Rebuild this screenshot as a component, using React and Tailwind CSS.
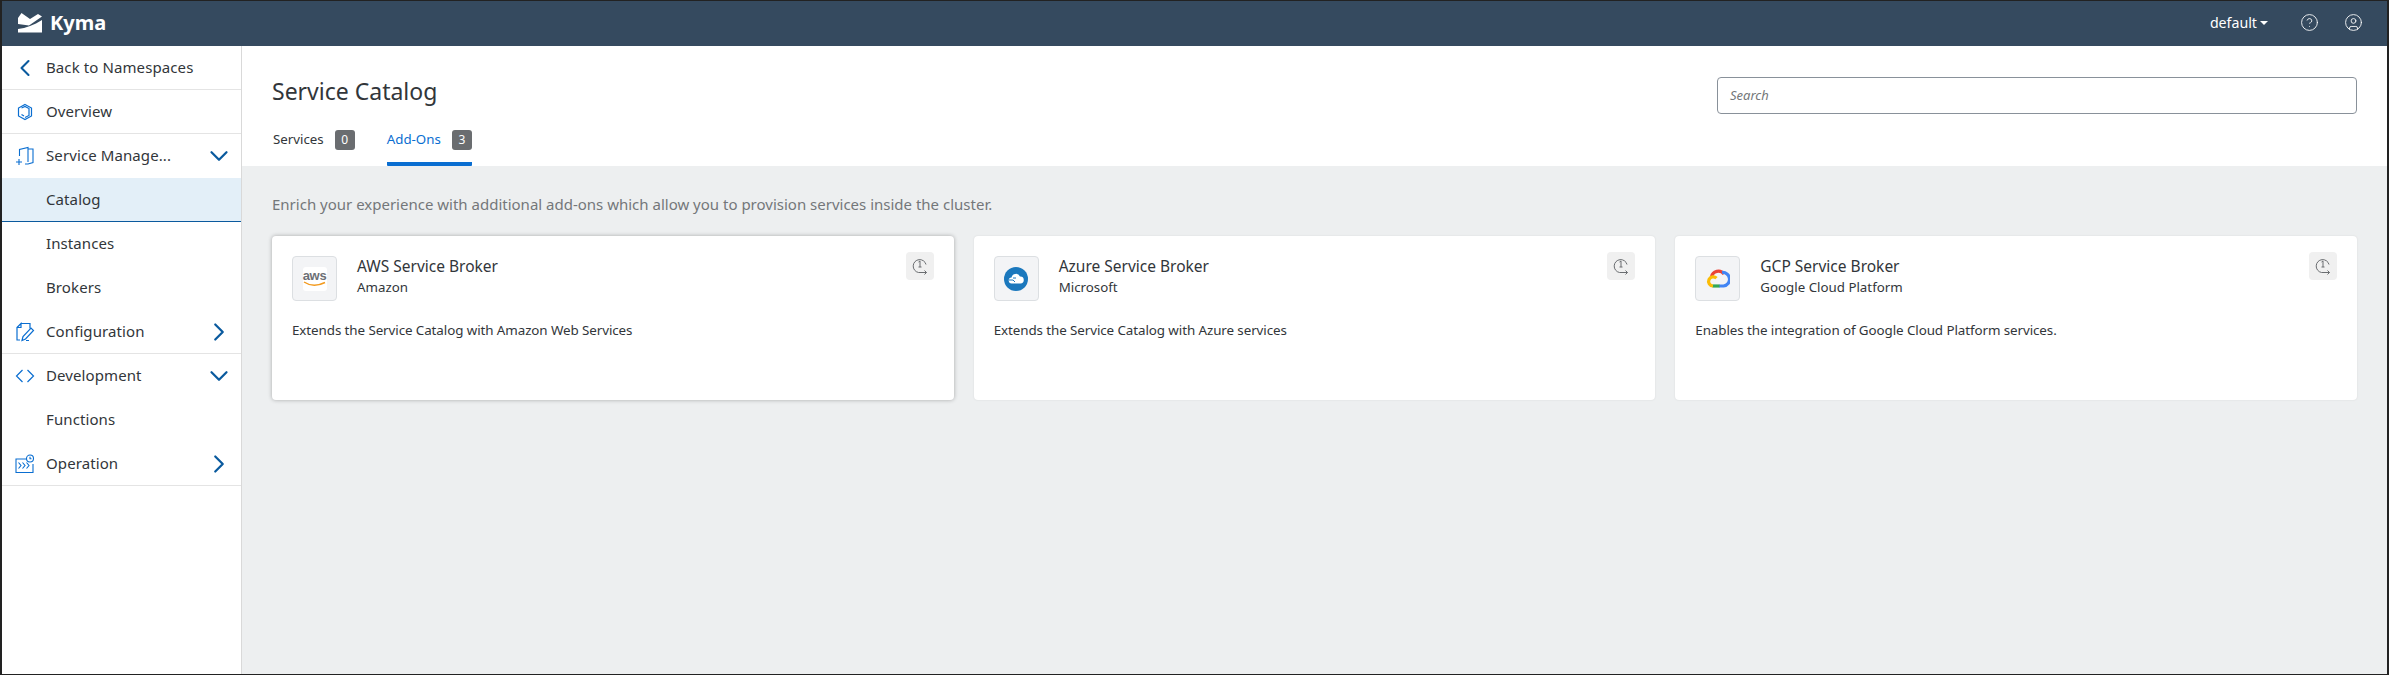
import React from "react";
import { ChevronLeft, ChevronRight, ChevronDown, CircleHelp, CircleUser } from "lucide-react";

const font = { fontFamily: '"Noto Sans", sans-serif' };

const OverviewIcon = () => (
  <svg width="18" height="18" viewBox="0 0 18 18" fill="none" stroke="#0a6ed1" strokeWidth="1.2">
    <path d="M9 1.5 15.5 5v8L9 16.5 2.5 13V5L9 1.5Z" />
    <path d="M5.5 5 9 3.4 13 5.5v7L9 14.5" />
    <path d="M5.5 11.5 8 13" />
  </svg>
);

const ServiceIcon = () => (
  <svg width="20" height="20" viewBox="0 0 20 20" fill="none" stroke="#0a6ed1" strokeWidth="1.1">
    <path d="M4.5 10V3.5L13 1.5V16" />
    <path d="M13 3h5v13.5l-5 1.5h-3" />
    <path d="M1 16h6M4 13v6" />
  </svg>
);

const ConfigIcon = () => (
  <svg width="20" height="20" viewBox="0 0 20 20" fill="none" stroke="#0a6ed1" strokeWidth="1.2">
    <path d="M6 1.5h9v5M2 5.5 6 1.5v4H2v12.5h3M11 18.5h3" />
    <path d="M7 18.5l1-4 8-8.5 2.5 2.5-8 8.5-3.5 1.5Z" />
  </svg>
);

const DevIcon = () => (
  <svg width="20" height="16" viewBox="0 0 20 16" fill="none" stroke="#0a6ed1" strokeWidth="1.2">
    <path d="M7.5 2 1.5 8l6 6M12.5 2l6 6-6 6" />
  </svg>
);

const OperationIcon = () => (
  <svg width="20" height="20" viewBox="0 0 20 20" fill="none" stroke="#0a6ed1" strokeWidth="1.1">
    <path d="M12 5H1v13.5h17V10" />
    <path d="M3.5 8.5 6 11.5l-2.500 3M7.500 8.500l2.500 3-2.500 3M11.500 8.500l2.500 3-2.500 3" />
    <circle cx="15" cy="4.500" r="3.500" />
    <path d="M15 2.800v1.900h1.500" />
  </svg>
);

const NavRow = ({ icon, label, toggle, active, border }) => (
  <div
    className={`h-[44px] shrink-0 flex items-center ${active ? "bg-[#e3eff8] border-b border-[#0a5a9e]" : ""} ${
      border ? "border-b border-[#e4e4e4]" : ""
    }`}
  >
    <div className="w-[44px] pl-[1px] flex justify-center items-center shrink-0">{icon}</div>
    <span className="text-[15px] leading-[20px] pb-[2px] text-[#32363a] flex-1 tracking-[0.1px]">{label}</span>
    {toggle === "down" && <ChevronDown className="w-[30px] h-[30px] mr-[7px] text-[#0a5a9e]" strokeWidth={1.8} />}
    {toggle === "right" && <ChevronRight className="w-[30px] h-[30px] mr-[7px] text-[#0a5a9e]" strokeWidth={1.8} />}
  </div>
);

const ClockButton = () => (
  <div className="w-[28px] h-[28px] rounded-[4px] bg-[#f0f0f0] flex items-center justify-center">
    <svg width="18" height="18" viewBox="0 0 18 18" fill="none" stroke="#6a6d70" strokeWidth="1">
      <path d="M11 15.500H7.500A6.500 6.500 0 1 1 15 7.500" />
      <path d="M9 15.500h6.500M13.500 13.500l2 2-2 2" />
      <path d="M7.500 5l1.500-1v6M7.500 10h3" />
    </svg>
  </div>
);

const AwsLogo = () => (
  <div className="w-[24px] h-[24px] rounded-[3px] bg-white flex flex-col items-center justify-center">
    <span className="text-[13px] leading-[11px] font-bold text-[#6b6f75] tracking-tight" style={{ fontFamily: '"Liberation Sans", sans-serif' }}>
      aws
    </span>
    <svg width="24" height="6" viewBox="0 0 24 6" fill="none" stroke="#f39a1e" strokeWidth="1.400">
      <path d="M1 1c6 4 14 4 21 .500" />
    </svg>
  </div>
);

const AzureLogo = () => (
  <svg width="24" height="24" viewBox="0 0 24 24">
    <circle cx="12" cy="12" r="12" fill="#1b78bd" />
    <path d="M8 16.500a3 3 0 0 1-.500-6 4.500 4.500 0 0 1 8.500-1 3.500 3.500 0 0 1 .500 7H8Z" fill="#fff" />
    <path d="M5 13h4l2 2" fill="none" stroke="#1b78bd" strokeWidth="1" />
    <path d="M9 11h3" fill="none" stroke="#1b78bd" strokeWidth="1" />
  </svg>
);

const GcpLogo = () => (
  <svg width="24" height="20" viewBox="0 0 24 20" fill="none" strokeWidth="3.200">
    <path d="M5.500 8A7 7 0 0 1 18 5" stroke="#ea4335" />
    <path d="M16 3.500A6.500 6.500 0 0 1 17.500 17H13" stroke="#4285f4" />
    <path d="M13.500 17H6.500" stroke="#34a853" />
    <path d="M7 17A4.600 4.600 0 1 1 10.500 9.200" stroke="#fbbc05" />
  </svg>
);

const CARDS = [
  { title: "AWS Service Broker", vendor: "Amazon", text: "Extends the Service Catalog with Amazon Web Services", logo: <AwsLogo />, raised: true },
  { title: "Azure Service Broker", vendor: "Microsoft", text: "Extends the Service Catalog with Azure services", logo: <AzureLogo /> },
  { title: "GCP Service Broker", vendor: "Google Cloud Platform", text: "Enables the integration of Google Cloud Platform services.", logo: <GcpLogo /> },
];

const Card = ({ title, vendor, text, logo, raised }) => (
  <div className={`h-[164px] bg-white rounded-[4px] px-[20px] pt-[20px] ${raised ? "shadow-[0_0_4px_rgba(0,0,0,0.3)]" : "shadow-[0_0_2px_rgba(0,0,0,0.1)]"}`}>
    <div className="flex items-start">
      <div className="w-[45px] h-[45px] rounded-[4px] border border-[#dcdfe2] bg-[#f3f4f6] flex items-center justify-center shrink-0">
        {logo}
      </div>
      <div className="ml-[20px] flex-1">
        <div className="text-[15.500px] leading-[20px] text-[#32363a]">{title}</div>
        <div className="text-[13.300px] leading-[20px] text-[#32363a] mt-[1px]">{vendor}</div>
      </div>
      <div className="-mt-[4px]">
        <ClockButton />
      </div>
    </div>
    <p className="mt-[19px] text-[13.400px] leading-[20px] tracking-[-0.09px] text-[#32363a]">{text}</p>
  </div>
);

const Badge = ({ n }) => (
  <span className="w-[20px] h-[20px] rounded-[3px] bg-[#6a6d70] text-white text-[12px] flex items-center justify-center">{n}</span>
);

export default function App() {
  return (
    <div className="w-[2389px] h-[675px] flex flex-col border-x-2 border-t border-b border-[#222] bg-white overflow-hidden" style={font}>
      <header className="h-[45px] shrink-0 bg-[#354a5f] flex items-center text-white pl-[16px] pb-[1px]">
        <svg width="24" height="20" viewBox="0 0 24 20" fill="#fff">
          <path d="M0 5 3.500 0 12 6l8-5 4 2.500-13 9L0 11Z" />
          <path d="M0 16C8 15 16 12 24 7v12.500H0Z" />
        </svg>
        <span className="ml-[8px] text-[20px] font-bold leading-none">Kyma</span>
        <div className="ml-auto flex items-center">
          <span className="text-[14.200px]">default</span>
          <span className="ml-[3px] w-0 h-0 border-x-[4px] border-x-transparent border-t-[4px] border-t-white" />
          <CircleHelp className="ml-[32px] w-[19px] h-[19px]" strokeWidth={1.100} />
          <CircleUser className="ml-[25px] w-[19px] h-[19px]" strokeWidth={1.100} />
          <div className="w-[24px]" />
        </div>
      </header>

      <div className="flex-1 flex min-h-0">
        <aside className="w-[240px] shrink-0 bg-white border-r border-[#d9d9d9] flex flex-col">
          <NavRow border label="Back to Namespaces" icon={<ChevronLeft className="w-[28px] h-[28px] text-[#0a5a9e]" strokeWidth={1.800} />} />
          <NavRow border label="Overview" icon={<OverviewIcon />} />
          <NavRow label="Service Manage..." icon={<ServiceIcon />} toggle="down" />
          <NavRow active label="Catalog" />
          <NavRow label="Instances" />
          <NavRow label="Brokers" />
          <NavRow border label="Configuration" icon={<ConfigIcon />} toggle="right" />
          <NavRow label="Development" icon={<DevIcon />} toggle="down" />
          <NavRow label="Functions" />
          <NavRow border label="Operation" icon={<OperationIcon />} toggle="right" />
        </aside>

        <main className="flex-1 min-w-0 flex flex-col bg-[#edeff0]">
          <section className="h-[120px] shrink-0 bg-white px-[30px] flex flex-col">
            <div className="flex items-start justify-between pt-[29px]">
              <h1 className="text-[23px] leading-[32px] text-[#32363a]">Service Catalog</h1>
              <div className="w-[640px] h-[37px] mt-[2px] rounded-[4px] border border-[#89919a] flex items-center px-[12px] text-[13px] italic text-[#74777a]">
                Search
              </div>
            </div>
            <div className="mt-auto flex text-[13.300px] gap-[32px] pl-[1px]">
              <div className="flex items-center gap-[11px] h-[44px] pb-[8px] text-[#32363a]">
                Services <Badge n="0" />
              </div>
              <div className="flex items-center gap-[11px] h-[44px] pb-[4px] text-[#0a6ed1] border-b-[4px] border-[#0a6ed1] rounded-b-[1px]">
                Add-Ons <Badge n="3" />
              </div>
            </div>
          </section>

          <section className="px-[30px] pt-[26px]">
            <p className="text-[15px] leading-[24px] text-[#74777a]">
              Enrich your experience with additional add-ons which allow you to provision services inside the cluster.
            </p>
            <div className="mt-[20px] grid grid-cols-3 gap-[20px]">
              {CARDS.map((c) => (
                <Card key={c.title} {...c} />
              ))}
            </div>
          </section>
        </main>
      </div>
    </div>
  );
}
